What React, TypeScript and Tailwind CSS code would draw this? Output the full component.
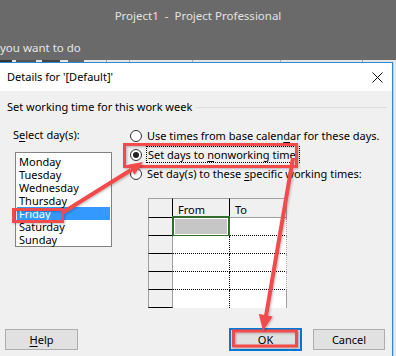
import React from "react";

const days = ["Monday", "Tuesday", "Wednesday", "Thursday", "Friday", "Saturday", "Sunday"];

function Radio({ checked }: { checked?: boolean }) {
  return (
    <span className="w-[12px] h-[12px] shrink-0 rounded-full border border-[#333333] bg-white flex items-center justify-center">
      {checked && <span className="w-[6px] h-[6px] rounded-full bg-[#222222]" />}
    </span>
  );
}

function TimesGrid() {
  const rows = [0, 1, 2, 3, 4];
  return (
    <div className="ml-[18px] mt-[15px] w-[139px] flex flex-col">
      {/* header */}
      <div className="flex h-[20px]">
        <div className="w-[25px] border-t border-l border-r border-b border-t-[#a0a0a0] border-l-[#a0a0a0] border-r-black border-b-black bg-[#f0f0f0]" />
        <div className="w-[57px] border-t border-r border-b border-t-[#a0a0a0] border-r-black border-b-[#a0a0a0] bg-[#f0f0f0] pl-[5px] pt-[3px] leading-[15px]">
          From
        </div>
        <div className="w-[57px] border-t border-r border-b border-[#a0a0a0] bg-[#f0f0f0] pl-[5px] pt-[3px] leading-[15px]">
          To
        </div>
      </div>
      {rows.map((r) => (
        <div key={r} className="flex h-[18px]">
          <div className="w-[25px] border-l border-r border-b border-l-[#a0a0a0] border-r-[#a0a0a0] border-b-black bg-[#f0f0f0]" />
          <div
            className={`relative w-[57px] border-r border-dotted border-r-black bg-white ${
              r === 4 ? "" : "border-b border-b-black"
            }`}
          >
            {r === 0 && (
              <div className="absolute -top-[2px] -left-[1px] w-[58px] h-[21px] border-2 border-[#2f6d2f] bg-white p-px">
                <div className="w-full h-full bg-[#c6c6c6]" />
              </div>
            )}
          </div>
          <div
            className={`w-[57px] border-r border-r-[#a0a0a0] bg-white ${
              r === 4 ? "" : "border-b border-dotted border-b-black"
            }`}
          />
        </div>
      ))}
    </div>
  );
}

function Annotations() {
  const red = "#f24b4b";
  return (
    <svg className="absolute inset-0 pointer-events-none" width="396" height="356" viewBox="0 0 396 356">
      <defs>
        <filter id="sh" x="-10%" y="-10%" width="120%" height="120%">
          <feDropShadow dx="1" dy="1" stdDeviation="0.8" floodColor="#000" floodOpacity="0.25" />
        </filter>
      </defs>
      <g filter="url(#sh)" fill="none" stroke={red} strokeWidth="3">
        <rect x="124.5" y="144.5" width="172" height="22" />
        <rect x="13.5" y="209.5" width="49" height="12" />
        <rect x="233.5" y="331" width="63" height="15" />
        <line x1="62" y1="213" x2="131" y2="170" strokeWidth="4" />
        <line x1="293" y1="158" x2="266" y2="316" strokeWidth="4" />
      </g>
      <g filter="url(#sh)" fill={red}>
        <polygon points="143,162 134.6,174.7 128,164.7" />
        <polygon points="263,331 272.7,316.4 258.9,314" />
      </g>
    </svg>
  );
}

export default function App() {
  return (
    <div className="relative w-[396px] h-[356px] overflow-hidden bg-[#6a6a6a] font-['Noto_Sans','Open_Sans',sans-serif] text-[11px] text-black">
      {/* app title */}
      <div className="h-[31px] flex items-center justify-center text-[11.5px] text-[#e2e2e2] whitespace-pre">
        Project1  -  Project Professional
      </div>
      <div className="h-[29px] pt-[8px] text-[11.5px] leading-[18px] text-[#e6e6e6]">you want to do</div>
      {/* clipped ribbon edge */}
      <div className="h-[2px] flex bg-[#e4e4e4]">
        <div className="w-[12px] bg-[#333]" />
        <div className="ml-[4px] w-[20px] bg-[#555]" />
        <div className="ml-[6px] w-[18px] bg-[#444]" />
        <div className="ml-[8px] w-[16px] bg-[#666]" />
        <div className="ml-[22px] w-px bg-[#aaa]" />
        <div className="ml-[22px] w-px bg-[#aaa]" />
        <div className="ml-[62px] w-px bg-[#aaa]" />
        <div className="ml-[87px] w-px bg-[#aaa]" />
        <div className="ml-[81px] w-px bg-[#aaa]" />
      </div>

      <div className="flex h-[294px]">
        {/* dialog */}
        <div className="w-[393px] border-t border-r border-[#2b87da] bg-[#f0f0f0] flex flex-col">
          {/* dialog title bar */}
          <div className="h-[28px] shrink-0 bg-white flex items-center justify-between pl-[7px] pr-[9px]">
            <span className="leading-[14px]">Details for '[Default]'</span>
            <svg width="11" height="11" viewBox="0 0 11 11">
              <path d="M0.5 0.5 L10.5 10.5 M10.5 0.5 L0.5 10.5" stroke="#111" strokeWidth="1" />
            </svg>
          </div>

          {/* group header */}
          <div className="h-[32px] shrink-0 flex items-center pl-[7px] pr-[5px] gap-[4px]">
            <span className="leading-[14px] whitespace-nowrap">Set working time for this work week</span>
            <div className="flex-1 h-px bg-[#dcdcdc]" />
          </div>

          {/* content */}
          <div className="flex">
            <div className="w-[130px] shrink-0 pl-[13px]">
              <div className="mt-[5px] leading-[14px]">
                S<u className="underline-offset-2">e</u>lect day(s):
              </div>
              <div className="mt-[10px] ml-[2px] w-[97px] h-[95px] border border-[#828282] bg-white pt-[2px] px-px">
                {days.map((d) => (
                  <div
                    key={d}
                    className={`h-[13px] leading-[13px] pl-[2px] ${d === "Friday" ? "bg-[#3399ff] text-white" : ""}`}
                  >
                    {d}
                  </div>
                ))}
              </div>
            </div>

            <div className="flex flex-col">
              <div className="mt-[3px] h-[19px] flex items-center">
                <Radio />
                <span className="ml-[5px] leading-[14px] whitespace-nowrap">
                  Use times from base calen<u className="underline-offset-2">d</u>ar for these days.
                </span>
              </div>
              <div className="h-[19px] flex items-center">
                <Radio checked />
                <span className="ml-[4px] pl-px leading-[15px] border border-dotted border-black whitespace-nowrap">
                  Set days to <u className="underline-offset-2">n</u>onworking time.
                </span>
              </div>
              <div className="h-[19px] flex items-center">
                <Radio />
                <span className="ml-[5px] leading-[14px] whitespace-nowrap">
                  Set day(s) to these <u className="underline-offset-2">s</u>pecific working times:
                </span>
              </div>
              <TimesGrid />
            </div>
          </div>

          {/* buttons */}
          <div className="mt-[21px] flex pl-[5px] pr-[7px]">
            <button className="w-[73px] h-[21px] border border-[#adadad] bg-[#e1e1e1] leading-[19px]">
              <u className="underline-offset-2">H</u>elp
            </button>
            <div className="flex-1" />
            <button className="w-[73px] h-[23px] -mt-px border-2 border-[#0078d7] bg-[#e1e1e1] leading-[19px]">OK</button>
            <button className="ml-[11px] w-[72px] h-[21px] border border-[#adadad] bg-[#e1e1e1] leading-[19px]">
              Cancel
            </button>
          </div>
        </div>
        <div className="flex-1 bg-[#e9e9e9] border-l border-[#d0d0d0]" />
      </div>

      <Annotations />
    </div>
  );
}
